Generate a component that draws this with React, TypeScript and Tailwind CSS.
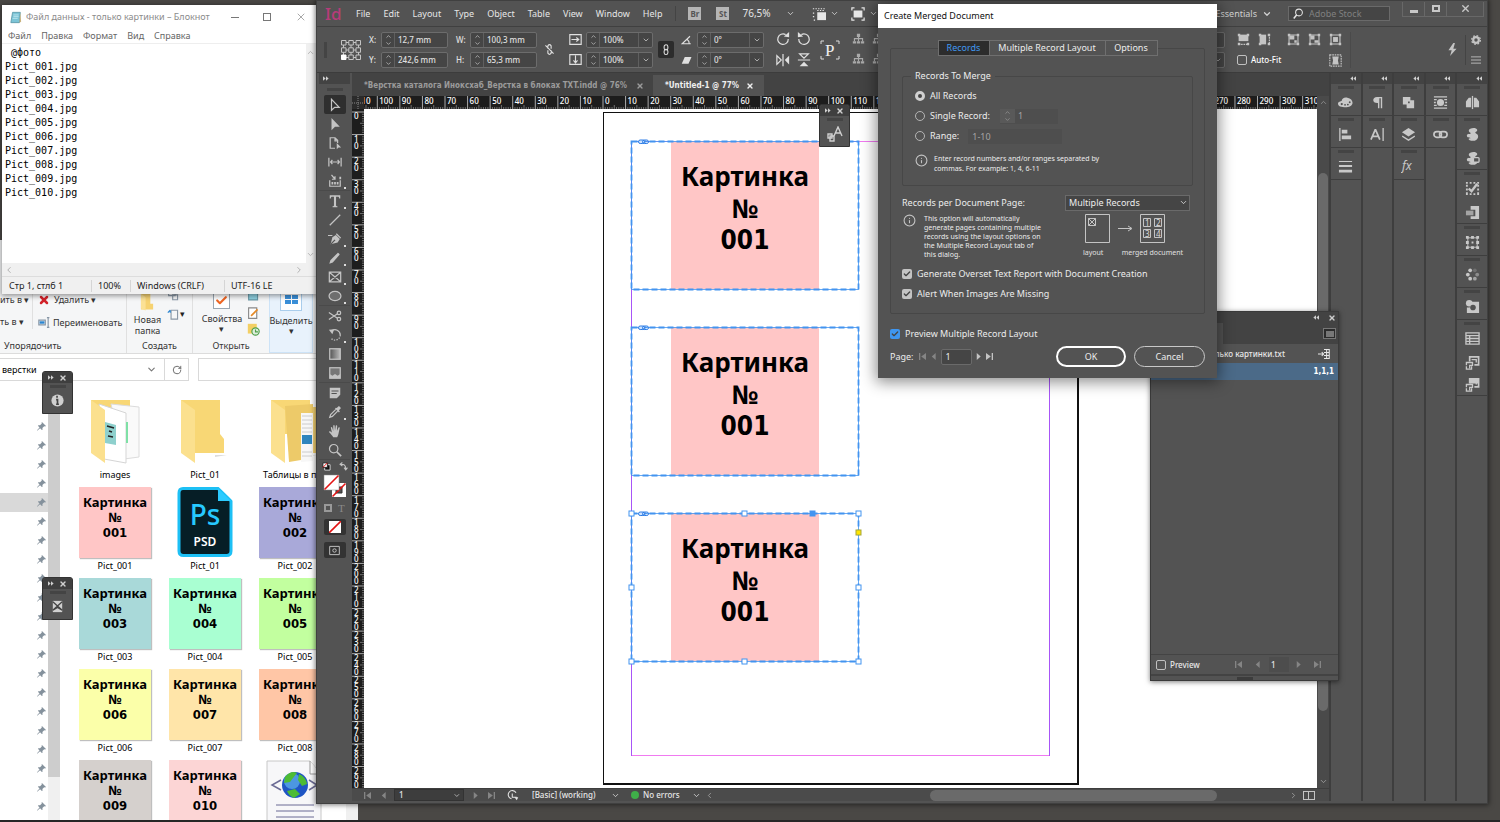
import { ReactNode } from "react";
import { Check, ChevronDown, ChevronLeft, ChevronRight, ChevronUp, Info, RotateCw, X } from "lucide-react";

const UI = "font-['Noto_Sans','Open_Sans',sans-serif]";
const BOLD_UI = "font-['DejaVu_Sans_Condensed','Noto_Sans',sans-serif] font-bold";

/* ---------- icons ---------- */

type IconProps = { children: ReactNode; size?: number; className?: string };

function Svg({ children, size = 14, className = "" }: IconProps) {
  return (
    <svg viewBox="0 0 16 16" width={size} height={size} fill="none" stroke="currentColor" strokeWidth="1.4" className={`shrink-0 ${className}`} aria-hidden="true">
      {children}
    </svg>
  );
}

const fill = { fill: "currentColor", stroke: "none" };

const toolGroups: { name: string; more?: boolean; icon: ReactNode }[][] = [
  [
    { name: "Selection", icon: <path d="M4 1.500v12.500l3.600-3.400h5.200z" /> },
    { name: "Direct Selection", icon: <path {...fill} d="M4 1v14l4-4h5.500z" /> },
    { name: "Page", icon: <><path d="M8 14H2.500V2H8l3 3v3M8 2v3.500h3" /><path {...fill} d="M10 8v7l2-2h3z" /></> },
    { name: "Gap", icon: <path d="M1 3v10M15 3v10M3 8h10M5 5.500L3 8l2 2.500M11 5.500L13 8l-2 2.500" /> },
    { name: "Content Collector", more: true, icon: <><path d="M2 7v7h12V7M4 1l4 5M8 2.500V6H4.500" /><path {...fill} d="M4 9h2v3H4zM7 9h2v3H7zM10 9h2v3h-2zM13 3h2v3h-2z" /></> },
  ],
  [
    { name: "Type", more: true, icon: <path {...fill} d="M2 1.500h12V5h-1.200c-.2-1.300-.6-1.800-1.800-1.800H9.200V13c0 .6.500.8 1.600.9V15H5.200v-1.100c1.100-.1 1.600-.3 1.600-.9V3.200H5C3.800 3.200 3.400 3.700 3.200 5H2z" /> },
    { name: "Line", icon: <path d="M2 14L14 2" /> },
    { name: "Pen", more: true, icon: <><path {...fill} d="M3 14l2-8 4-2.500L13.500 8 11 12z" /><path stroke="#535353" d="M3.500 13.500L8 9" /><path d="M0 4h5M9.500 2l5 5" /></> },
    { name: "Pencil", more: true, icon: <path {...fill} d="M1.500 14.500l1.200-4L11 2.200c.6-.6 2.800 1.600 2.200 2.200L5.500 13z" /> },
    { name: "Rectangle Frame", more: true, icon: <path d="M1.500 2.500h13v11h-13zM1.500 2.500l13 11M14.500 2.500l-13 11" /> },
    { name: "Ellipse", more: true, icon: <ellipse cx="8" cy="8" rx="6.800" ry="5.300" fill="#6e6e6e" /> },
  ],
  [
    { name: "Scissors", icon: <><circle cx="12.500" cy="4.500" r="2" /><circle cx="12.500" cy="11.500" r="2" /><path d="M1 4l9.800 6.500M1 12l9.800-6.500" /></> },
    { name: "Rotate", more: true, icon: <><path d="M4 3.500C8 0 14 3 14 8" /><path strokeDasharray="1.500 1.500" d="M14 8c0 6-8 8-11 3" /><path {...fill} d="M1 2l6-.5L5 7z" /></> },
    { name: "Gradient Swatch", icon: <><defs><linearGradient id="swatch"><stop stopColor="#555" /><stop offset="1" stopColor="#bbb" /></linearGradient></defs><rect x="2" y="2" width="12" height="12" fill="url(#swatch)" /></> },
    { name: "Gradient Feather", icon: <><rect x="2" y="2" width="12" height="12" fill="#777" /><path {...fill} d="M2 9l3 2 3-2 3 2 3-2v5H2z" /></> },
  ],
  [
    { name: "Note", icon: <path {...fill} fillRule="evenodd" d="M2 2h12v8l-4 4H2zM4 5v1.200h8V5zM4 8v1.200h6V8z" /> },
    { name: "Eyedropper", more: true, icon: <><path d="M9 5L3 11l-1 3 3-1 6-6" /><path {...fill} d="M8 4l4.500 4.500 1-1-1-1.500 2-2c.8-.8-1.700-3.300-2.500-2.500l-2 2L9 3z" /></> },
    { name: "Hand", icon: <path {...fill} d="M6 15c-1-2-3-4-5-6 .8-1.200 2-.5 3.500 1L3.200 4c.3-1 1.300-.8 1.600 0L6 8V2c.3-1 1.400-1 1.600 0L8 7.500l1-5.700c.5-.8 1.500-.5 1.500.5L10.200 8l1.800-4c.6-.8 1.600-.3 1.400.6L12 11c-.4 1.800-1 3-1.500 4z" /> },
    { name: "Zoom", icon: <><circle cx="6.500" cy="6.500" r="4.800" /><path strokeWidth="2" d="M10 10l5 5" /></> },
  ],
];

type DockCell = { name: string; icon: ReactNode }[];

const handles = <path {...fill} d="M1 1h3v3H1zM12 1h3v3h-3zM1 12h3v3H1zM12 12h3v3h-3z" />;

const puzzle = <path {...fill} d="M4 4c0-3 8-4 9-1 .5 2-2 2-2 3s3 1 3 4c0 4-5 6-9 4-2-1-1-2 1-2 0-1-4 0-4-3 0-2 3-1 4-2s-2-1-2-3z" />;

const overlayFrame = (
  <>
    <path d="M5 7V2h9.500v8.500H10" strokeWidth="1.800" />
    <path d="M7 5h5v3" />
    <path d="M4 8H1.500v3M1.500 12v3H7v-3M4 8h4v3H5v3" />
  </>
);

const dockColumns: DockCell[][] = [
  [
    [{ name: "Color", icon: <path {...fill} fillRule="evenodd" d="M0 9c0-2 3-2 4-3 0-2 3-4 6-3 7 1 8 10-1 10-6 0-9-1-9-4zm4-.5a1.200 1.200 0 100 2.400 1.200 1.200 0 000-2.400zM7.500 9.500a1 1 0 100 2 1 1 0 000-2zm3-.3a1 1 0 100 2 1 1 0 000-2zm2-2.500a1 1 0 100 2 1 1 0 000-2z" /> }],
    [{ name: "Align", icon: <><path d="M2 1v14" /><path {...fill} d="M4 3h6v4H4zM4 9h10v4H4z" /></> }],
    [{ name: "Stroke", icon: <path {...fill} d="M1 2h14v1.200H1zM1 6.500h14v2H1zM1 11.500h14v3H1z" /> }],
  ],
  [
    [{ name: "Paragraph", icon: <path {...fill} d="M13 2v12h-1.500V3.500H10V14H8.500V8.500C2 9 2 2 7.500 2z" /> }],
    [{ name: "Character", icon: <><path strokeWidth="1.800" d="M1 13.500L5.500 3h.5l4.500 10.500M3 10h6" /><path d="M14 1v14" /></> }],
  ],
  [
    [{ name: "Pathfinder", icon: <path {...fill} fillRule="evenodd" d="M2 2h8v3.500h4V14H6v-4H2zm5.500 5v1.800h1.800V7z" /> }],
    [{ name: "Layers", icon: <path {...fill} d="M8 1l7 4.500L8 10 1 5.500zM1.500 9L8 13l6.500-4L15 10.500 8 15l-7-4.500z" /> }],
    [{ name: "Effects", icon: <text x="1" y="12" fontSize="13" fontStyle="italic" fill="currentColor" stroke="none">fx</text> }],
  ],
  [
    [{ name: "Text Wrap", icon: <><path d="M1 2h14M1 14h14M1 5h3M12 5h3M1 8h2M13 8h2M1 11h3M12 11h3" /><circle cx="8" cy="8" r="3.800" {...fill} /></> }],
    [{ name: "Links", icon: <><rect x="1" y="5" width="8" height="6" rx="3" strokeWidth="1.800" /><rect x="7" y="5" width="8" height="6" rx="3" strokeWidth="1.800" /></> }],
  ],
  [
    [{ name: "Pages", icon: <><path {...fill} d="M1 7l3-4h2.500v10H1zM15 7l-3-4H9.500v10H15z" /><path d="M8 1v14" /></> }],
    [
      { name: "CC Libraries", icon: puzzle },
      { name: "Data Merge", icon: <>{puzzle}<rect x="9" y="7" width="6" height="5" rx="1" fill="#535353" /></> },
    ],
    [
      { name: "Preflight", icon: <><path strokeDasharray="2 2" strokeWidth="2" d="M1 2h14M1 14h14M2 4v9M14 4v9" /><path strokeWidth="2.500" d="M4 8l3 3 6-8" /></> },
      { name: "Text Frame", icon: <><path {...fill} d="M6 1h9v14H6v-3h5V5H6z" /><path {...fill} opacity="0.7" d="M1 6h8v5H1z" /></> },
    ],
    [{ name: "Transform", icon: <><path d="M3 3h10v10H3z" strokeWidth="1" /><path {...fill} d="M1 1h3v3H1zM6.500 1h3v3h-3zM12 1h3v3h-3zM1 6.500h3v3H1zM12 6.500h3v3h-3zM1 12h3v3H1zM6.500 12h3v3h-3zM12 12h3v3h-3zM7 7h2v2H7z" /></> }],
    [{ name: "Swatches", icon: <><circle cx="3" cy="8" r="2" {...fill} /><circle cx="5.500" cy="3.500" r="2" {...fill} /><circle cx="5.500" cy="12.500" r="2" {...fill} /><circle cx="10.500" cy="12.500" r="2" {...fill} opacity="0.7" /><circle cx="13" cy="8" r="2" {...fill} opacity="0.5" /><circle cx="10.500" cy="3.500" r="2" {...fill} opacity="0.25" /></> }],
    [{ name: "Object Styles", icon: <><path {...fill} d="M7 3h8v12H2V9h3z" /><circle cx="4.500" cy="4.500" r="3.500" {...fill} /><circle cx="8.500" cy="9" r="3" fill="#535353" stroke="none" /></> }],
    [
      { name: "Table", icon: <path d="M1 2h14v12H1zM1 5h14M5 5v9M1 8h14M1 11h14" /> },
      { name: "Table Styles", icon: overlayFrame },
      { name: "Cell Styles", icon: <>{overlayFrame}<path {...fill} d="M5 2h9v5H5z" /></> },
    ],
  ],
];

function Chevrons({ left = false }: { left?: boolean }) {
  return (
    <svg viewBox="0 0 8 6" width="6" height="5" fill="#d0d0d0" className={left ? "rotate-180" : ""} aria-hidden="true">
      <path d="M0 0l3.500 3L0 6zM4 0l3.500 3L4 6z" />
    </svg>
  );
}

function Nav({ kind, dim = false }: { kind: "first" | "prev" | "next" | "last"; dim?: boolean }) {
  const paths = {
    first: "M0 0h1.500v8H0zM8 0v8L2.500 4z",
    prev: "M6.500 0v8L2 4z",
    next: "M2 0v8l4.500-4z",
    last: "M6.500 0H8v8H6.500zM0 0v8l5.500-4z",
  };
  return (
    <button aria-label={`${kind} page`} className={dim ? "text-[#858585]" : "text-[#c4c4c4]"}>
      <svg viewBox="0 0 8 8" width="7" height="7" fill="currentColor" aria-hidden="true"><path d={paths[kind]} /></svg>
    </button>
  );
}

/* ---------- Notepad ---------- */

const fileText = [" @фото", ...Array.from({ length: 10 }, (_, i) => `Pict_${String(i + 1).padStart(3, "0")}.jpg`)].join("\n");

function Notepad() {
  return (
    <section className={`absolute left-[2px] top-[5px] flex h-[289px] w-[314px] flex-col bg-white text-[9px] leading-3 text-[#222] shadow-[0_1px_5px_1px_rgba(0,0,0,0.4)] ${UI}`}>
      <header className="flex h-6 shrink-0 items-center pl-2 pr-[9px] text-[#8b8b8b]">
        <svg viewBox="0 0 14 14" width="12" height="13" aria-hidden="true">
          <path d="M3 1h9l-1 12H1z" fill="#7cc4d6" stroke="#5a98a8" />
          <path d="M12 1l1 11-2 1z" fill="#c9b27d" />
          <path d="M4 4h6M4 6h6M3 8h6" stroke="#bfe6ef" />
        </svg>
        <h1 className="ml-1 flex-1">Файл данных - только картинки – Блокнот</h1>
        <div className="flex w-[76px] items-center justify-between">
          <button aria-label="Minimize" className="h-px w-2 bg-[#777]" />
          <button aria-label="Maximize" className="h-2 w-2 border border-[#777]" />
          <button aria-label="Close"><X size={12} strokeWidth={1.500} /></button>
        </div>
      </header>
      <nav className="flex h-[15px] shrink-0 items-center gap-[10px] border-b border-[#eee] pl-[6px] text-[#666]">
        {["Файл", "Правка", "Формат", "Вид", "Справка"].map((m) => <button key={m}>{m}</button>)}
      </nav>
      <div className="flex min-h-0 flex-1">
        <textarea
          aria-label="Текст"
          defaultValue={fileText}
          className="flex-1 resize-none overflow-hidden bg-white pl-[3px] pt-[2px] font-['DejaVu_Sans_Mono','Liberation_Mono',monospace] text-[10px] leading-[14px] text-black outline-none"
        />
        <div className="flex w-[10px] flex-col justify-between bg-[#f0f0f0] py-1 text-[#a5a5a5]">
          <ChevronUp size={9} />
          <ChevronDown size={9} />
        </div>
      </div>
      <div className="flex h-[13px] shrink-0 items-center justify-between bg-[#f0f0f0] pl-[2px] pr-3 text-[#a5a5a5]">
        <ChevronLeft size={10} />
        <ChevronRight size={10} />
      </div>
      <footer className="flex h-[18px] shrink-0 items-center border-t border-[#ddd] bg-[#f0f0f0]">
        <span className="w-[90px] border-r border-[#d5d5d5] pl-[7px]">Стр 1, стлб 1</span>
        <span className="w-[39px] border-r border-[#d5d5d5] pl-[6px]">100%</span>
        <span className="w-[94px] border-r border-[#d5d5d5] pl-[6px]">Windows (CRLF)</span>
        <span className="pl-[6px]">UTF-16 LE</span>
      </footer>
    </section>
  );
}

/* ---------- Explorer ---------- */

function PictureCard({ no, color }: { no: string; color: string }) {
  return (
    <div
      className={`h-[71px] w-[72px] pt-2 text-center text-[13px] font-bold leading-[15px] text-black shadow-[1px_1px_1px_rgba(0,0,0,0.25)] ${UI}`}
      style={{ backgroundColor: color }}
    >
      <p>Картинка</p>
      <p>№</p>
      <p className={BOLD_UI}>{no}</p>
    </div>
  );
}

function Folder({ kind }: { kind: "images" | "empty" | "tables" }) {
  return (
    <svg viewBox="0 0 60 66" width="60" height="66" aria-hidden="true">
      <path d="M40 57h12l-12 2z" fill="#ddd" />
      <path d={kind === "empty" ? "M6 2h39v34l4 5v14H6z" : "M6 2h39v34H6z"} fill="#f8d775" />
      {kind === "images" && (
        <>
          <path d="M26 6l28 3v50l-15 2z" fill="#fafafa" stroke="#dcdcdc" />
          <path d="M14 6l27 9v50l-22-4z" fill="#fff" stroke="#d5d5d5" />
          <path d="M20 24l11 3v20l-11-2z" fill="#8ed0cd" />
          <path d="M22 28l7 2M24 33l3 1M23 38l5 1" stroke="#222" strokeWidth="1.500" />
          <path d="M41 24h2v21h-2z" fill="#7fe0a6" />
        </>
      )}
      {kind === "tables" && (
        <>
          <path d="M20 8l28-2v54l-24 4z" fill="#edca69" />
          <path d="M36 15h12v48l-12 1z" fill="#f7f7f7" />
          <path d="M37 18h10M37 22h10M37 26h10M37 30h10M37 34h10M37 54h10M37 58h10" stroke="#ccc" />
          <path d="M37 37h10v9H37z" fill="#2f85bd" />
          <path d="M48 9h8v46h-8z" fill="#f5d476" />
        </>
      )}
      <path d="M6 2l14 10v53L6 55z" fill="#fbe08e" />
    </svg>
  );
}

function PsdFile() {
  return (
    <svg viewBox="0 0 56 70" width="56" height="70" className={UI} aria-hidden="true">
      <path d="M6 1.500h35L54 14v50q0 4.500-4.500 4.500h-43Q2 68.500 2 64V6q0-4.500 4-4.500z" fill="#061e26" stroke="#1dc0f5" strokeWidth="3" />
      <path d="M41 1.500V14h13z" fill="#2ccbff" />
      <path d="M43 0h13v14z" fill="#fff" />
      <text x="28" y="38" textAnchor="middle" fontSize="28" fontWeight="500" fill="#26c9ff">Ps</text>
      <text x="28" y="59" textAnchor="middle" fontSize="12" fontWeight="600" fill="#fff">PSD</text>
    </svg>
  );
}

function WebFile() {
  return (
    <svg viewBox="0 0 60 70" width="60" height="70" aria-hidden="true">
      <path d="M2 1h43l11 13v56H2z" fill="#f7f7f9" stroke="#c8c8c8" />
      <path d="M45 1v13h11" fill="#fff" stroke="#999" />
      <path d="M16 20L7 25l9 5M44 20l8 5-8 5" fill="none" stroke="#6b6b95" strokeWidth="1.500" />
      <circle cx="30" cy="25" r="13" fill="#1f55c4" />
      <circle cx="27" cy="21" r="8" fill="#5fb4ee" opacity=".7" />
      <path d="M20 17q6-7 12-4l-4 5-3 4-6 1zM34 14q7 3 8 10l-5 2-4-6zM22 31l8-2 5 5-6 4q-5-2-7-7z" fill="#4dbb34" />
      <path d="M11 45h38M11 51h38M11 57h38M11 63h38" stroke="#6b6b95" />
    </svg>
  );
}

const files: { name: string; no?: string; color?: string; folder?: "images" | "empty" | "tables"; psd?: boolean; web?: boolean }[] = [
  { name: "images", folder: "images" },
  { name: "Pict_01", folder: "empty" },
  { name: "Таблицы в п", folder: "tables" },
  { name: "Pict_001", no: "001", color: "#ffc6c6" },
  { name: "Pict_01", psd: true },
  { name: "Pict_002", no: "002", color: "#a9a9d9" },
  { name: "Pict_003", no: "003", color: "#a9d9d9" },
  { name: "Pict_004", no: "004", color: "#a9ffd2" },
  { name: "Pict_005", no: "005", color: "#c2ff9f" },
  { name: "Pict_006", no: "006", color: "#fbffa9" },
  { name: "Pict_007", no: "007", color: "#ffe5a9" },
  { name: "Pict_008", no: "008", color: "#ffc6a6" },
  { name: "", no: "009", color: "#d5d0cd" },
  { name: "", no: "010", color: "#fcd5d5" },
  { name: "", web: true },
];

function Pin() {
  return (
    <svg viewBox="0 0 10 10" width="9" height="9" fill="#84919c" aria-hidden="true">
      <path d="M5.500 0L10 4.500l-1 .5-1-.3-2 2 .2 1.800-.8.5-2-2L.5 9.500 0 10l.3-1.200L2.800 6 1 4.200l.6-.7 1.800.2 2-2L5 1z" />
    </svg>
  );
}

function Explorer() {
  return (
    <section className={`absolute bottom-0 left-0 top-[240px] flex w-[358px] flex-col overflow-hidden bg-white text-[9px] leading-3 text-[#333] ${UI}`}>
      <div className="flex h-[114px] shrink-0 items-end border-b border-[#dcdcdc] bg-[#f5f6f7]">
        <div className="flex w-[127px] flex-col border-r border-[#e0e0e0] pb-px">
          <div className="mb-[11px] flex">
            <div className="flex w-[33px] flex-col gap-[10px] overflow-hidden border-r border-[#e0e0e0]">
              <button className="self-start whitespace-nowrap">ить в ▾</button>
              <button className="self-start whitespace-nowrap">ть в ▾</button>
            </div>
            <div className="flex flex-col gap-[10px] pl-[5px]">
              <button className="flex items-center gap-1"><X size={12} strokeWidth={5} color="#d2232a" />Удалить ▾</button>
              <button className="flex items-center gap-[2px] whitespace-nowrap">
                <Svg size={13}><path stroke="#8796a5" d="M1 5h8v6H1zM11 2h3M11 14h3M12.500 2v12" /><path fill="#2b85d0" stroke="none" d="M2 6.500h6v3H2z" /></Svg>
                Переименовать
              </button>
            </div>
          </div>
          <span className="pl-1">Упорядочить</span>
        </div>
        <div className="flex w-[66px] flex-col items-center border-r border-[#e0e0e0] pb-px">
          <div className="mb-1 flex gap-[6px]">
            <button className="flex flex-col items-center gap-[2px] leading-[11px]">
              <svg viewBox="0 0 16 22" width="15" height="22" aria-hidden="true"><path d="M1 0h10v14h3v6H1z" fill="#f6d271" /><path d="M1 3l5 4v14l-5-2z" fill="#fbe195" /></svg>
              <span>Новая<br />папка</span>
            </button>
            <div className="flex flex-col gap-1 text-[#8a98a6]">
              <Svg size={13}><path d="M2 1h8v6H2zM7 6h6v6H7z" /></Svg>
              <div className="flex items-center"><Svg size={13}><path d="M5 4h8v11H5z" /><path stroke="#2b85d0" d="M1 7l3-3M4 4v3" /></Svg><span className="text-[9px] text-[#222]">▾</span></div>
            </div>
          </div>
          <span>Создать</span>
        </div>
        <div className="flex w-[76px] flex-col items-center pb-px">
          <div className="mb-1 flex gap-[5px]">
            <button className="flex flex-col items-center">
              <span className="mb-1 flex h-[18px] w-[17px] items-center justify-center border border-[#9aa7b3] bg-white"><Check size={13} strokeWidth={4} color="#ee6624" /></span>
              <span>Свойства</span>
              <span className="h-2 leading-[8px]">▾</span>
            </button>
            <div className="flex flex-col gap-[3px]">
              <Svg size={13}><path fill="#8fd0e0" stroke="#6a9aa8" d="M2 1h11v10H2z" /></Svg>
              <Svg size={13}><path fill="#fff" stroke="#888" d="M2 1h10v13H2z" /><path stroke="#e58a26" strokeWidth="2" d="M5 11l8-8" /></Svg>
              <Svg size={13}><path fill="#f3cf64" stroke="none" d="M1 1h11v12H1z" /><circle cx="10.500" cy="10.500" r="4.500" fill="#dfeedd" stroke="#4e9f4a" /><path stroke="#4e9f4a" d="M10.500 8v3h3" /></Svg>
            </div>
          </div>
          <span>Открыть</span>
        </div>
        <div className="flex h-[112px] w-[44px] flex-col items-center justify-end border border-[#cde3f7] bg-[#e8f2fc] pb-[17px]">
          <button className="flex flex-col items-center">
            <span className="mb-1 flex h-6 w-[22px] items-center justify-center border border-[#a9cdec] bg-white">
              <span className="grid grid-cols-2 gap-px"><i className="h-1 w-[6px] bg-[#3a8fd8]" /><i className="h-1 w-[6px] bg-[#3a8fd8]" /><i className="h-1 w-[6px] bg-[#3a8fd8]" /><i className="h-1 w-[6px] bg-[#3a8fd8]" /></span>
            </span>
            <span>Выделить</span>
            <span className="h-2 leading-[8px]">▾</span>
          </button>
        </div>
      </div>
      <div className="flex h-[31px] shrink-0 items-center gap-[9px]">
        <div className="flex h-[23px] w-[189px] items-center border border-l-0 border-[#d9d9d9]">
          <input aria-label="Адрес" defaultValue="верстки" className="min-w-0 flex-1 pl-[2px] text-black outline-none" />
          <button aria-label="Список адресов" className="w-6 pl-[6px]"><ChevronDown size={11} strokeWidth={2.500} color="#777" /></button>
          <button aria-label="Обновить" className="flex h-full w-6 items-center justify-center border-l border-[#d9d9d9]"><RotateCw size={10} color="#555" /></button>
        </div>
        <input aria-label="Поиск" className="h-[23px] min-w-0 flex-1 border border-[#d9d9d9]" />
      </div>
      <div className="flex min-h-0 flex-1">
        <ul className="w-12 shrink-0 overflow-hidden pt-8">
          {Array.from({ length: 22 }, (_, i) => (
            <li key={i} className={`flex h-[19px] items-center justify-end pr-[2px] ${i === 4 ? "bg-[#d9d9d9]" : ""}`}><Pin /></li>
          ))}
        </ul>
        <div className="w-3 shrink-0 bg-[#f0f0f0]"><div className="h-[392px] bg-[#cdcdcd]" /></div>
        <ul className="ml-[10px] grid shrink-0 auto-rows-[91px] grid-cols-[90px_90px_90px] pt-[10px]">
          {files.map((f, i) => (
            <li key={i} className="flex flex-col items-center gap-[2px] text-black">
              <div className="flex h-[72px] shrink-0 items-center">
                {f.no && <PictureCard no={f.no} color={f.color!} />}
                {f.folder && <Folder kind={f.folder} />}
                {f.psd && <PsdFile />}
                {f.web && <WebFile />}
              </div>
              <span className={`whitespace-nowrap ${f.folder === "tables" ? "self-start pl-[13px]" : ""}`}>{f.name}</span>
            </li>
          ))}
        </ul>
        <div className="ml-auto w-3 bg-[#f0f0f0]" />
      </div>
    </section>
  );
}

/* ---------- InDesign: top bars ---------- */

function MenuBar() {
  return (
    <header className="flex h-[26px] shrink-0 items-center border-b border-[#404040] pl-2 pr-[3px] text-[9px]">
      <span className="w-[31px] text-[17px] font-medium leading-5 text-[#b73c7a]">Id</span>
      <nav className="flex gap-[13px]">
        {["File", "Edit", "Layout", "Type", "Object", "Table", "View", "Window", "Help"].map((m) => <button key={m}>{m}</button>)}
      </nav>
      <div className="ml-[13px] flex items-center border-l border-[#444] pl-3">
        <button className="h-[13px] w-[13px] bg-[#b5b5b5] text-[8px] font-bold leading-[13px] text-[#555]">Br</button>
        <button className="ml-[15px] h-[13px] w-[13px] bg-[#b5b5b5] text-[8px] font-bold leading-[13px] text-[#555]">St</button>
        <label className="ml-[13px] flex items-center">
          <select aria-label="Zoom" className="w-[44px] appearance-none text-[10px] outline-none"><option>76,5%</option></select>
          <ChevronDown size={9} />
        </label>
        <button aria-label="View options" className="ml-[17px] flex items-center gap-1"><Svg><path {...fill} d="M6 6h10v9H6z" /><path strokeDasharray="1.500 1.500" d="M1 2h14M1 7h3M1 11h3M2 15h3M6 4h9" /></Svg><ChevronDown size={9} /></button>
        <button aria-label="Screen mode" className="ml-3 flex items-center gap-1"><Svg><path {...fill} d="M3 4h10v8H3z" /><path d="M1 4V1h3M12 1h3v3M15 12v3h-3M4 15H1v-3" /></Svg><ChevronDown size={9} /></button>
      </div>
      <div className="ml-auto flex items-center">
        <button className="flex items-center gap-[5px] text-[#d0d0d0]">Essentials <ChevronDown size={10} strokeWidth={3} /></button>
        <label className="ml-4 flex h-[15px] w-[102px] items-center gap-1 border border-[#6a6a6a] bg-[#454545] px-1">
          <Svg size={12}><circle cx="8" cy="6" r="4.500" /><path d="M5 9l-4 5" strokeWidth="2" /></Svg>
          <input aria-label="Adobe Stock" placeholder="Adobe Stock" className="w-full min-w-0 outline-none placeholder:text-[#808080]" />
        </label>
        <div className="mb-[9px] ml-[12px] flex h-[15px] w-[82px] items-center border border-t-0 border-[#686868] text-[#c8c8c8]">
          <button aria-label="Minimize" className="flex h-full w-[21px] items-end justify-center pb-[3px]"><span className="h-[3px] w-2 bg-[#c8c8c8]" /></button>
          <button aria-label="Maximize" className="flex h-full w-[23px] items-center justify-center border-x border-[#686868]"><span className="h-[7px] w-2 border-2 border-[#c8c8c8]" /></button>
          <button aria-label="Close" className="flex h-full flex-1 items-center justify-center"><X size={11} strokeWidth={3} /></button>
        </div>
      </div>
    </header>
  );
}

function ValueBox({ name, value, dropdown = false }: { name: string; value: string; dropdown?: boolean }) {
  return (
    <div className="flex h-4 w-[67px] items-center rounded-[2px] border border-[#6c6c6c] bg-[#454545]">
      <button aria-label={`Step ${name}`} className="flex h-full w-[13px] shrink-0 flex-col items-center justify-center border-r border-[#5f5f5f]">
        <ChevronUp size={7} /><ChevronDown size={7} />
      </button>
      <input aria-label={name} defaultValue={value} className="w-0 min-w-0 flex-1 pl-[3px] outline-none" />
      {dropdown && <button aria-label={`${name} presets`} className="flex h-full w-[14px] items-center justify-center border-l border-[#5f5f5f]"><ChevronDown size={8} /></button>}
    </div>
  );
}

const tree = <><path {...fill} d="M6 1h4v4H6zM1 10h4v3H1zM6 10h4v3H6zM11 10h4v3h-4z" /><path d="M8 5v5M3 10V7h10v3" /></>;

function ControlBar() {
  return (
    <div className="flex h-[46px] shrink-0 items-center border-b border-[#3c3c3c] pl-[7px] pr-px text-[8px] font-medium text-[#e0e0e0]">
      <span className="h-4 w-[3px] bg-[#444]" />
      <svg viewBox="0 0 20 20" width="20" height="20" className="ml-[14px]" fill="none" stroke="#c4c4c4" aria-hidden="true">
        <path d="M5 2.500h10M5 10h10M5 17.500h10M2.500 5v10M10 5v10M17.500 5v10" />
        <path fill="#535353" d="M.5.500h4.500v4.500H.5zM7.800.500h4.500v4.500H7.800zM15 .5h4.500v4.500H15zM.5 7.800h4.500v4.500H.5zM7.800 7.800h4.500v4.500H7.800zM15 7.800h4.500v4.500H15zM7.800 15h4.500v4.500H7.800zM15 15h4.500v4.500H15z" />
        <path fill="#fff" stroke="#fff" d="M.5 15h4.500v4.500H.5z" />
      </svg>
      <div className="ml-2 grid grid-cols-[auto_auto_auto_auto] items-center gap-1">
        <span className="w-2">X:</span><ValueBox name="X" value="12,7 mm" />
        <span className="w-[14px] pl-1">W:</span><ValueBox name="W" value="100,3 mm" />
        <span className="w-2">Y:</span><ValueBox name="Y" value="242,6 mm" />
        <span className="w-[14px] pl-1">H:</span><ValueBox name="H" value="65,3 mm" />
      </div>
      <Svg className="ml-[6px]" size={13}><path d="M6 7V3.500q2-3 4 0V7M6 9v3.500q2 3 4 0V9M3 3l10 10" /></Svg>
      <div className="ml-[13px] grid grid-cols-[auto_auto] items-center gap-1">
        <Svg size={13}><path d="M1 2h14v12H1zM3 8h9M9 5.500L12 8l-3 2.500" /></Svg><ValueBox name="Scale X" value="100%" dropdown />
        <Svg size={13}><path d="M1 2h14v12H1zM8 3v9M5.500 9L8 12l2.500-3" /></Svg><ValueBox name="Scale Y" value="100%" dropdown />
      </div>
      <button aria-label="Constrain" className="ml-[5px] flex h-[17px] w-4 items-center justify-center rounded-[2px] bg-[#2c2c2c]">
        <Svg size={12}><rect x="5.500" y="1" width="5" height="7" rx="2.500" /><rect x="5.500" y="7" width="5" height="7" rx="2.500" /></Svg>
      </button>
      <div className="ml-[7px] grid grid-cols-[auto_auto] items-center gap-1">
        <Svg size={12}><path d="M13 13H1.500L12 3M8 7q3 2 3 6" /></Svg><ValueBox name="Rotation" value="0°" dropdown />
        <Svg size={12}><path {...fill} d="M5 4h9l-4 9H1z" /></Svg><ValueBox name="Shear" value="0°" dropdown />
      </div>
      <div className="ml-3 grid grid-cols-2 gap-[7px]">
        <Svg><path d="M14 8a6 6 0 11-3-5" /><path {...fill} d="M9 5l6 1V0z" /></Svg>
        <Svg><path d="M2 8a6 6 0 103-5" /><path {...fill} d="M7 5L1 6V0z" /></Svg>
        <Svg><path d="M1 3v10l5-5zM8 1v14" /><path {...fill} d="M15 3v10l-5-5z" /></Svg>
        <Svg><path d="M3 1h10L8 6zM1 8h14" /><path {...fill} d="M3 15h10l-5-5z" /></Svg>
      </div>
      <svg viewBox="0 0 20 20" width="20" height="20" className="ml-[9px] font-['Liberation_Serif',serif]" fill="none" stroke="#ddd" aria-hidden="true">
        <path d="M1 4V1h3M16 1h3v3M19 16v3h-3M4 19H1v-3" />
        <text x="5" y="16" fontSize="17" fill="#eee" stroke="none">P</text>
      </svg>
      <div className="ml-3 grid grid-cols-2 gap-[7px] text-[#aaa]">
        <Svg size={13}>{tree}</Svg><Svg size={13}>{tree}</Svg><Svg size={13}>{tree}</Svg><Svg size={13}>{tree}</Svg>
      </div>
      <div className="ml-auto flex items-center text-[#c4c4c4]">
        <div className="flex flex-col gap-1">
          <ValueBox name="Columns" value="" /><ValueBox name="Gutter" value="" dropdown />
        </div>
        <div className="ml-3 flex flex-col gap-2">
          <div className="flex items-center gap-2">
            <Svg size={13}>{handles}<path {...fill} d="M2 2h12v8H2z" /><path strokeDasharray="2 1" d="M2 14h12" /></Svg>
            <Svg size={13}>{handles}<path {...fill} d="M2 2h8v12H2z" /><path strokeDasharray="2 1" d="M14 2v12" /></Svg>
            <span className="h-3" />
            <Svg size={13}>{handles}<path d="M2.500 2.500h11v11h-11z" /><path {...fill} d="M3 3h6v5H3zM9 9h3v3H9z" /></Svg>
            <Svg size={13}>{handles}<path d="M2.500 2.500h11v11h-11z" /><path {...fill} d="M3 3h5v5H3zM8 9h5v3H8z" /></Svg>
            <Svg size={13}>{handles}<path d="M2.500 2.500h11v11h-11z" /><path {...fill} d="M5 5h6v6H5z" /></Svg>
          </div>
          <div className="flex items-center justify-between">
            <label className="flex items-center gap-1 text-white">
              <input type="checkbox" className="h-[10px] w-[10px] appearance-none rounded-[2px] border border-[#c0c0c0]" />Auto-Fit
            </label>
            <Svg size={13}><path strokeDasharray="2 1" d="M1 1h14v14H1z" /><path {...fill} d="M4 3h8l-1 5 1 5H4l1-5z" /></Svg>
          </div>
        </div>
        <span className="ml-2 h-9 border-l border-[#4a4a4a]" />
        <Svg size={13} className="ml-[95px]"><path {...fill} d="M9 0L3 9h4l-2 7 8-9H9l2-7z" /></Svg>
        <div className="ml-[6px] flex flex-col items-center gap-[10px] border-l border-[#444] px-[5px]">
          <Svg size={10}><circle cx="8" cy="8" r="4.500" strokeWidth="3.500" /><circle cx="8" cy="8" r="7" strokeWidth="2" strokeDasharray="2.750 2.750" /></Svg>
          <Svg size={10}><path d="M0 3h16M0 8h16M0 13h16" /></Svg>
        </div>
      </div>
    </div>
  );
}

/* ---------- InDesign: tools and dock ---------- */

function ToolColumn() {
  return (
    <aside className="flex w-[31px] shrink-0 flex-col bg-[#535353]">
      <div className="flex h-[11px] items-center bg-[#434343] pl-1"><Chevrons /></div>
      <div className="flex h-[11px] items-center justify-center"><span className="h-[3px] w-4 bg-[#444]" /></div>
      <div className="flex flex-col items-center text-[#c4c4c4]">
        {toolGroups.map((group, g) => (
          <div key={g} className="flex w-full flex-col items-center border-b border-[#4a4a4a]">
            {group.map((t) => (
              <button
                key={t.name}
                aria-label={t.name}
                className={`relative flex h-[19px] w-[22px] items-center justify-center ${t.name === "Selection" ? "rounded-[2px] bg-[#2f2f2f]" : ""}`}
              >
                <Svg>{t.icon}</Svg>
                {t.more && <i className="absolute bottom-px right-0 h-[2px] w-[2px] bg-[#ddd]" />}
              </button>
            ))}
          </div>
        ))}
        <div className="mt-[2px] flex w-[26px] justify-between">
          <svg viewBox="0 0 10 10" width="9" height="9" aria-hidden="true"><path d="M3 3h6v6H3z" fill="#111" stroke="#ddd" /><path d="M1 1h5v5H1z" fill="#fff" stroke="#222" /><path d="M1 6l5-5" stroke="#e00" /></svg>
          <Svg size={9}><path strokeWidth="2" d="M3 4q9-1 9 8M9 10l3 4 3-4M6 1L2 4l4 3" /></Svg>
        </div>
        <svg viewBox="0 0 24 24" width="24" height="24" className="mt-[3px]" aria-label="Fill and stroke">
          <path d="M9 9h14v14H9z" fill="#fff" />
          <path d="M13 13h6v6h-6z" fill="#535353" stroke="#333" />
          <path d="M9.500 22.500l13-13" stroke="#e31414" strokeWidth="1.600" />
          <path d="M1 1h15v15H1z" fill="#fff" stroke="#888" strokeWidth=".5" />
          <path d="M1.500 15.500l14-14" stroke="#e31414" strokeWidth="1.600" />
        </svg>
        <div className="mt-[2px] flex h-4 w-[26px] items-center justify-around">
          <button aria-label="Formatting affects container" className="h-2 w-2 border-2 border-[#999]" />
          <button className="font-['Liberation_Serif',serif] text-[11px] leading-3 text-[#8a8a8a]">T</button>
        </div>
        <button aria-label="Apply none" className="mt-[3px] flex h-4 w-[22px] items-center justify-center rounded-[2px] bg-[#333]">
          <svg viewBox="0 0 12 12" width="12" height="12"><path d="M0 0h12v12H0z" fill="#fff" /><path d="M0 12L12 0" stroke="#e31414" strokeWidth="1.600" /></svg>
        </button>
        <button aria-label="View mode" className="mt-[7px] flex h-4 w-[22px] items-center justify-center rounded-[2px] bg-[#333]">
          <Svg size={11}><path d="M1 2h14v12H1z" /><circle cx="8" cy="8" r="2.500" /></Svg>
        </button>
      </div>
    </aside>
  );
}

function Dock() {
  return (
    <aside className="flex w-[158px] shrink-0 gap-[2px] bg-[#3e3e3e] pl-[2px]">
      {dockColumns.map((col, c) => (
        <div key={c} className="flex flex-1 flex-col bg-[#535353] text-[#c8c8c8]">
          <div className="flex h-[11px] items-center justify-end bg-[#434343] pr-[5px]"><Chevrons left /></div>
          {col.map((cell, i) => (
            <div key={i} className="flex flex-col items-center border-b border-[#3e3e3e]">
              <span className="mt-[2px] h-[3px] w-4 bg-[#444]" />
              {cell.map((item, k) => (
                <button key={item.name} aria-label={item.name} className={`flex items-center justify-center ${k === 0 ? "h-[26px] w-6" : "h-[22px] w-6"}`}>
                  <Svg size={15}>{item.icon}</Svg>
                </button>
              ))}
            </div>
          ))}
        </div>
      ))}
    </aside>
  );
}

/* ---------- InDesign: document ---------- */

const MM10 = 22.57;

function HorizontalRuler() {
  const marks = Array.from({ length: 43 }, (_, i) => i - 11);
  return (
    <svg className="block h-[13px] w-full bg-[#1d1d1d] font-medium" aria-hidden="true">
      {marks.map((m) => {
        const x = 239 + m * MM10;
        return (
          <g key={m} stroke="#aaa">
            <path d={`M${x} 0v13`} />
            {[1, 2, 3, 4, 5, 6, 7, 8, 9].map((t) => <path key={t} strokeWidth="0.6" d={`M${x + (t * MM10) / 10} ${t === 5 ? 9 : 11}v4`} />)}
            <text x={x + 2} y="8" fontSize="8" fill="#fff" stroke="none">{Math.abs(m * 10)}</text>
          </g>
        );
      })}
    </svg>
  );
}

function VerticalRuler() {
  const marks = Array.from({ length: 30 }, (_, i) => i);
  return (
    <svg className="block h-full w-3 shrink-0 bg-[#1d1d1d] font-medium" aria-hidden="true">
      {marks.map((m) => {
        const y = 3 + m * MM10;
        return (
          <g key={m} stroke="#aaa">
            <path d={`M0 ${y}h12`} />
            {[1, 2, 3, 4, 5, 6, 7, 8, 9].map((t) => <path key={t} strokeWidth="0.6" d={`M${t === 5 ? 8 : 10} ${y + (t * MM10) / 10}h4`} />)}
            {String(m * 10).split("").map((d, i) => <text key={i} x="2" y={y + 7 + i * 7} fontSize="8" fill="#fff" stroke="none">{d}</text>)}
          </g>
        );
      })}
    </svg>
  );
}

function ImageFrame({ selected = false }: { selected?: boolean }) {
  const knobs = [[0, 0], [113, 0], [227, 0], [0, 74], [227, 74], [0, 148], [113, 148], [227, 148]];
  return (
    <div className="relative h-[149px] w-[228px]">
      <div className={`ml-[40px] h-[148px] w-[148px] bg-[#ffc6c6] pt-[19px] text-center text-[26px] font-bold leading-8 text-black ${UI}`}>
        <p>Картинка</p>
        <p>№</p>
        <p className={BOLD_UI}>001</p>
      </div>
      <svg viewBox="0 0 228 149" className="absolute inset-0 h-full w-full overflow-visible" fill="none" stroke="#4394f0" aria-hidden="true">
        <path d="M.5.500h227v148H.5z" strokeWidth="0.800" />
        <path d="M.5.500h227v148H.5z" strokeWidth="1.800" strokeDasharray="6 3" />
        <rect x="7.500" y="-1" width="6" height="3.500" rx="1.700" fill="#cfe4ff" stroke="#2a7be6" />
        <rect x="11.500" y="-1" width="6" height="3.500" rx="1.700" stroke="#2a7be6" />
        {selected && (
          <>
            {knobs.map(([x, y]) => <rect key={`${x}-${y}`} x={x - 2} y={y - 2} width="5" height="5" fill="#fff" />)}
            <rect x="179" y="-2" width="5" height="5" fill="#4394f0" />
            <rect x="225" y="17" width="5" height="5" fill="#ffe600" stroke="#a5a53a" />
          </>
        )}
      </svg>
    </div>
  );
}

function Canvas() {
  return (
    <div className="relative min-w-0 flex-1 overflow-hidden bg-white">
      <div className="absolute left-[239px] top-[3px] h-[673px] w-[476px] border border-b-2 border-r-2 border-[#111] bg-white">
        <svg viewBox="0 0 419 615" className="absolute left-[27px] top-[28px] h-[615px] w-[419px]" fill="none" aria-hidden="true">
          <path d="M0 .5h419M0 614.500h419" stroke="#f07af0" />
          <path d="M.5 0v615M418.500 0v615" stroke="#a855f7" />
        </svg>
        <div className="absolute left-[27px] top-[28px] flex flex-col gap-[37px]">
          <ImageFrame />
          <ImageFrame />
          <ImageFrame selected />
        </div>
      </div>
    </div>
  );
}

function StatusBar() {
  return (
    <footer className="flex h-[13px] shrink-0 items-center border-t border-[#3e3e3e] bg-[#4b4b4b] pl-3 text-[8px] font-medium text-[#e6e6e6]">
      <div className="flex items-center gap-[9px]"><Nav kind="first" dim /><Nav kind="prev" dim /></div>
      <label className="ml-[7px] flex h-3 w-[70px] items-center border border-[#333] bg-[#3d3d3d]">
        <select aria-label="Page" className="w-full appearance-none pl-1 outline-none"><option>1</option></select>
        <ChevronDown size={9} className="mr-[2px]" />
      </label>
      <div className="ml-2 flex items-center gap-[9px]"><Nav kind="next" dim /><Nav kind="last" dim /></div>
      <Svg size={12} className="ml-3"><path d="M12 5A5.500 5.500 0 106 13M7 6v5h6" /><path {...fill} d="M10 11h5l-2 4z" /></Svg>
      <button className="ml-[13px] flex w-[88px] items-center justify-between whitespace-nowrap">[Basic] (working) <ChevronDown size={9} className="shrink-0" /></button>
      <i className="ml-[11px] h-2 w-2 rounded-full bg-[#3fae49]" />
      <button className="ml-[4px] flex w-[58px] items-center justify-between whitespace-nowrap">No errors <ChevronDown size={9} className="shrink-0" /></button>
      <div className="ml-1 flex h-full flex-1 items-center text-[#aaa]">
        <ChevronLeft size={9} />
        <div className="flex h-full flex-1 items-center justify-end pr-[72px]"><div className="h-[11px] w-[287px] rounded-full bg-[#6a6a6a]" /></div>
        <ChevronRight size={9} className="mr-[5px]" />
      </div>
      <button aria-label="Split view" className="mr-[14px] flex h-[9px] w-3 border border-[#c4c4c4]"><span className="h-full w-1/2 border-r border-[#c4c4c4]" /></button>
    </footer>
  );
}

function DocumentArea() {
  return (
    <main className="ml-[2px] flex min-w-0 flex-1 flex-col bg-[#434343]">
      <div className={`flex h-[23px] shrink-0 items-end text-[8px] leading-[21px] ${BOLD_UI}`}>
        <button className="flex h-[21px] w-[301px] items-center gap-[9px] whitespace-nowrap pl-3 text-[#9b9b9b]">
          *Верстка каталога Иноксхаб_Верстка в блоках TXT.indd @ 76% <X size={8} strokeWidth={4} />
        </button>
        <button className="flex h-[21px] w-[111px] items-center gap-[7px] whitespace-nowrap bg-[#535353] pl-3 text-[#efefef]">
          *Untitled-1 @ 77% <X size={8} strokeWidth={4} />
        </button>
      </div>
      <div className="flex h-[13px] shrink-0">
        <svg viewBox="0 0 12 13" width="12" height="13" className="shrink-0 bg-[#2b2b2b]" stroke="#888" aria-hidden="true"><path d="M0 7h12M6 0v13" strokeDasharray="1 1" /></svg>
        <div className="min-w-0 flex-1"><HorizontalRuler /></div>
        <div className="flex w-3 items-center justify-center bg-[#4a4a4a] text-[#999]"><ChevronUp size={9} /></div>
      </div>
      <div className="flex min-h-0 flex-1">
        <VerticalRuler />
        <Canvas />
        <div className="flex w-3 shrink-0 flex-col items-center bg-[#4a4a4a] pt-16 text-[#aaa]">
          <div className="w-[10px] flex-1 rounded-full bg-[#6a6a6a]" />
          <ChevronDown size={9} className="mb-[2px] mt-[66px] shrink-0" />
        </div>
      </div>
      <StatusBar />
    </main>
  );
}

function InDesign() {
  return (
    <section className={`absolute bottom-4 left-[316px] right-[12px] top-0 flex flex-col border border-[#404040] bg-[#535353] text-[#e6e6e6] shadow-[0_0_5px_1px_rgba(0,0,0,0.5)] ${UI}`}>
      <MenuBar />
      <ControlBar />
      <div className="flex min-h-0 flex-1 pb-[2px] pl-[2px]">
        <ToolColumn />
        <DocumentArea />
        <Dock />
      </div>
    </section>
  );
}

/* ---------- floating panels ---------- */

function MiniPanel({ className, children }: { className: string; children: ReactNode }) {
  return (
    <div className={`absolute flex h-[43px] w-[31px] flex-col items-center rounded-t-[3px] border border-[#333] bg-[#535353] text-[#d0d0d0] ${className}`}>
      <div className="flex h-[11px] w-full items-center justify-between rounded-t-[3px] bg-[#3f3f3f] px-[5px]"><Chevrons /><X size={8} strokeWidth={4} /></div>
      <span className="mt-[2px] h-[3px] w-4 bg-[#444]" />
      <div className="flex flex-1 items-center">{children}</div>
    </div>
  );
}

function DataMergePanel() {
  return (
    <section className={`absolute left-[1150px] top-[311px] flex h-[370px] w-[189px] flex-col border border-[#3a3a3a] bg-[#535353] text-[8px] font-medium text-[#e8e8e8] shadow-[0_1px_5px_rgba(0,0,0,0.5)] ${UI}`}>
      <div className="flex h-[11px] items-center justify-end gap-[9px] bg-[#434343] pr-[2px]"><Chevrons left /><X size={8} strokeWidth={4} color="#ccc" /></div>
      <div className="flex h-[21px] items-center justify-end bg-[#434343]">
        <span className="mr-auto h-full w-[72px] bg-[#535353]" />
        <button aria-label="Panel menu" className="mr-[2px] flex h-[11px] w-[13px] items-center justify-center border border-[#777] bg-[#2c2c2c]"><span className="h-[6px] w-2 bg-[#777]" /></button>
      </div>
      <div className="flex h-[19px] items-center justify-end pr-2">
        <span className="mr-[33px] whitespace-nowrap">Файл данных - только картинки.txt</span>
        <Svg size={12}><path d="M0 8h7M5 5.500L7.500 8 5 10.500M8 2h7v12H8M8 6h7M8 10h7M11.500 2v12" /></Svg>
      </div>
      <div className={`flex h-[17px] items-center justify-end bg-[#4b6a88] pr-1 text-white ${BOLD_UI}`}>1,1,1</div>
      <div className="flex-1" />
      <footer className="flex h-[20px] items-center border-t border-[#444] pl-[5px] pr-[17px]">
        <label className="mr-auto flex items-center gap-[4px]">
          <input type="checkbox" className="h-[10px] w-[10px] appearance-none rounded-[2px] border border-[#c0c0c0]" />Preview
        </label>
        <Nav kind="first" dim /><span className="w-3" /><Nav kind="prev" dim />
        <input aria-label="Record" defaultValue="1" className="ml-2 h-[15px] w-5 bg-[#4d4d4d] pl-[2px] outline-none" />
        <span className="w-[6px]" /><Nav kind="next" dim /><span className="w-3" /><Nav kind="last" dim />
      </footer>
      <div className="flex h-[6px] items-center justify-center border-t-2 border-[#434343]"><span className="h-[3px] w-4 bg-[#3c3c3c]" /></div>
    </section>
  );
}

function Checkbox({ label, accent = false }: { label: string; accent?: boolean }) {
  return (
    <label className="flex items-center gap-[5px]">
      <span className="relative flex h-[10px] w-[10px]">
        <input type="checkbox" defaultChecked className={`h-[10px] w-[10px] appearance-none rounded-[2px] ${accent ? "bg-[#3f96f0]" : "bg-[#c4c4c4]"}`} />
        <Check size={8} strokeWidth={4} color="#444" className="pointer-events-none absolute left-px top-px" />
      </span>
      {label}
    </label>
  );
}

function Radio({ label, checked = false }: { label: string; checked?: boolean }) {
  return (
    <label className="flex items-center gap-[5px]">
      <input
        type="radio"
        name="records"
        defaultChecked={checked}
        className="h-[10px] w-[10px] appearance-none rounded-full border border-[#b5b5b5] checked:border-[3px] checked:border-[#d0d0d0] checked:bg-[#444]"
      />
      {label}
    </label>
  );
}

function PageDiagram() {
  return (
    <figure className="w-[108px] text-[7px] leading-[9px] text-[#e0e0e0]">
      <div className="flex items-center pl-[6px]">
        <svg viewBox="0 0 80 29" width="80" height="29" fill="none" stroke="#c4c4c4" aria-hidden="true">
          <path d="M.5.500h24v28H.5zM3.500 4.500h7v7h-7zM3.500 4.500l7 7M10.500 4.500l-7 7M33 14.500h13M43 12l4 2.500-4 2.500" />
          <path d="M55.500.500h24v28h-24zM58.500 4.500h7v8h-7zM69.500 4.500h7v8h-7zM58.500 15.500h7v8h-7zM69.500 15.500h7v8h-7z" />
          <g fontSize="8" fill="#d8d8d8" stroke="none"><text x="60" y="12">1</text><text x="71" y="12">2</text><text x="60" y="23">3</text><text x="71" y="23">4</text></g>
        </svg>
      </div>
      <figcaption className="mt-[5px] flex justify-between pl-1"><span>layout</span><span className="whitespace-nowrap pr-1">merged document</span></figcaption>
    </figure>
  );
}

function MergeDialog() {
  return (
    <section role="dialog" aria-label="Create Merged Document" className={`absolute left-[878px] top-[4px] flex w-[339px] flex-col bg-[#535353] text-[9px] leading-3 text-[#ececec] shadow-[0_2px_14px_2px_rgba(0,0,0,0.45)] ${UI}`}>
      <header className="flex h-6 items-center bg-white pl-[6px] text-[#111]">Create Merged Document</header>
      <div className="px-3 pb-[11px] pt-3">
        <div role="tablist" className="relative z-10 mx-auto -mb-2 flex h-4 w-[220px] divide-x divide-[#6f6f6f] border border-[#6f6f6f] bg-[#535353]">
          <button role="tab" aria-selected="true" className="w-[51px] bg-[#2c2c2c] text-[#4098f0]">Records</button>
          <button role="tab" className="flex-1">Multiple Record Layout</button>
          <button role="tab" className="w-[51px]">Options</button>
        </div>
        <div className="rounded-[2px] border border-[#474747] px-[11px] pb-[13px] pt-[21px]">
          <fieldset className="h-[116px] rounded-[2px] border border-[#474747] pl-3">
            <legend className="-ml-1 px-1">Records To Merge</legend>
            <div className="mt-1 flex h-5 items-center"><Radio label="All Records" checked /></div>
            <div className="flex h-5 items-center gap-[10px]">
              <Radio label="Single Record:" />
              <span className="flex h-[15px] w-[58px] items-center bg-[#4e4e4e] text-[#a5a5a5]">
                <button aria-label="Step record" className="flex w-[15px] flex-col items-center bg-[#595959]"><ChevronUp size={7} /><ChevronDown size={7} /></button>
                <input aria-label="Record number" defaultValue="1" className="w-0 flex-1 pl-[3px] outline-none" />
              </span>
            </div>
            <div className="flex h-5 items-center gap-[9px]">
              <Radio label="Range:" />
              <input aria-label="Record range" defaultValue="1-10" className="h-[15px] w-[94px] bg-[#4e4e4e] pl-1 text-[#a5a5a5] outline-none" />
            </div>
            <div className="mt-2 flex gap-[6px] text-[7px] leading-[10px]">
              <Info size={13} strokeWidth={2} color="#c4c4c4" className="shrink-0" />
              <p>Enter record numbers and/or ranges separated by<br />commas. For example: 1, 4, 6-11</p>
            </div>
          </fieldset>
          <div className="mt-[9px] flex h-4 items-center justify-between pr-[3px]">
            <label htmlFor="per-page">Records per Document Page:</label>
            <div className="relative">
              <select id="per-page" className="h-4 w-[125px] appearance-none border border-[#6a6a6a] bg-[#454545] pl-[3px] outline-none"><option>Multiple Records</option></select>
              <ChevronDown size={9} className="pointer-events-none absolute right-[2px] top-[3px]" />
            </div>
          </div>
          <div className="mt-[3px] flex justify-between pr-[6px]">
            <div className="flex gap-2 text-[7px] leading-[9px]">
              <Info size={13} strokeWidth={2} color="#c4c4c4" className="ml-px shrink-0" />
              <p>This option will automatically<br />generate pages containing multiple<br />records using the layout options on<br />the Multiple Record Layout tab of<br />this dialog.</p>
            </div>
            <PageDiagram />
          </div>
          <div className="mt-[9px] flex flex-col gap-2">
            <Checkbox label="Generate Overset Text Report with Document Creation" />
            <Checkbox label="Alert When Images Are Missing" />
          </div>
        </div>
        <div className="mt-[14px]"><Checkbox label="Preview Multiple Record Layout" accent /></div>
        <div className="mt-[6px] flex items-center">
          <label htmlFor="page-no">Page:</label>
          <span className="ml-[5px] flex gap-[4px]"><Nav kind="first" dim /><Nav kind="prev" dim /></span>
          <input id="page-no" defaultValue="1" className="ml-[4px] h-4 w-[31px] rounded-[2px] border border-[#6a6a6a] bg-[#454545] pl-1 outline-none" />
          <span className="ml-[3px] flex gap-[4px]"><Nav kind="next" /><Nav kind="last" /></span>
          <button className="ml-auto h-[21px] w-[70px] rounded-full border-2 border-white">OK</button>
          <button className="ml-2 h-[21px] w-[71px] rounded-full border border-[#c8c8c8]">Cancel</button>
        </div>
      </div>
    </section>
  );
}

export default function App() {
  return (
    <div className="relative h-screen w-full overflow-hidden border-b-2 border-[#262626] bg-[#4a4845]">
      <Explorer />
      <Notepad />
      <InDesign />
      <MiniPanel className="left-[42px] top-[371px]"><Svg size={15}><circle cx="8" cy="8" r="6.500" {...fill} /><path stroke="#444" strokeWidth="1.800" d="M6.500 7H8v5M6.500 12h3M7.500 3v2" /></Svg></MiniPanel>
      <MiniPanel className="left-[42px] top-[577px]"><Svg size={15}><path {...fill} d="M3 2h10v12H3z" /><path stroke="#444" d="M3 3l10 9M13 3L3 12M3 12l5-3 5 3" /></Svg></MiniPanel>
      <MiniPanel className="left-[819px] top-[104px]"><Svg size={16}><path d="M7 10l4-9 4 9M8.500 7h5M1 8h4v4H1zM3 10h4v5H3z" /></Svg></MiniPanel>
      <DataMergePanel />
      <MergeDialog />
    </div>
  );
}
